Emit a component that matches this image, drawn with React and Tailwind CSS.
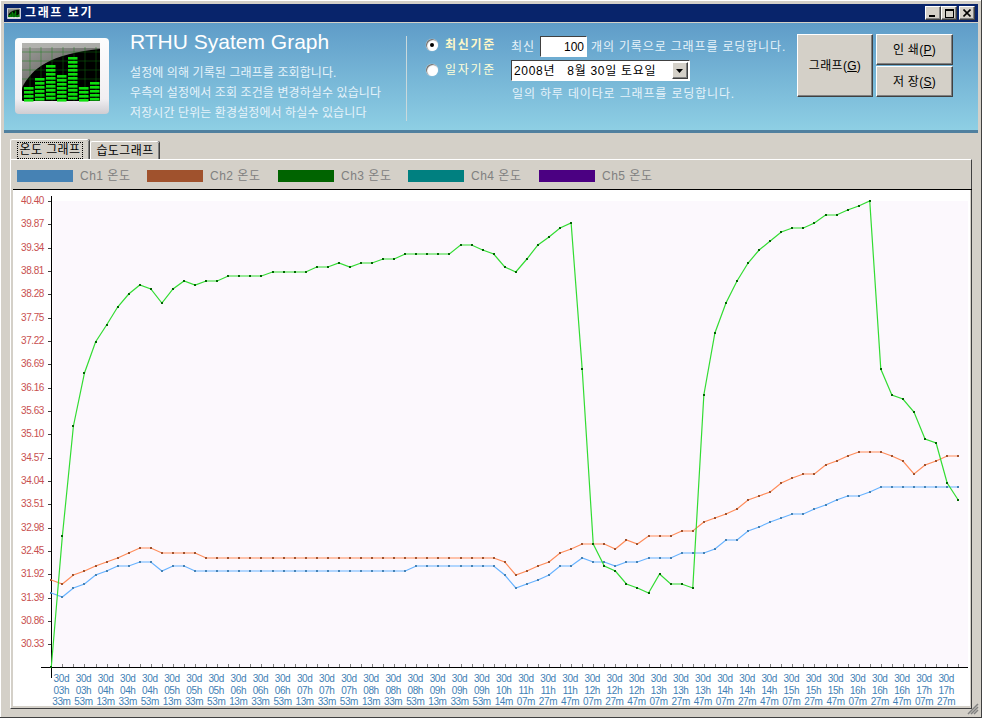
import React from "react";

const green = [666, 535, 425, 372, 341, 324, 306, 293, 284, 288, 302, 288, 280, 284, 280, 280, 275, 275, 275, 275, 271, 271, 271, 271, 266, 266, 262, 266, 262, 262, 258, 258, 253, 253, 253, 253, 253, 244, 244, 249, 253, 266, 271, 258, 244, 236, 227, 222, 368, 543, 565, 570, 583, 587, 592, 573, 583, 583, 587, 394, 332, 302, 280, 262, 249, 240, 231, 227, 227, 222, 214, 214, 209, 205, 200, 368, 394, 398, 411, 438, 442, 482, 499];
const orange = [579, 583, 574, 570, 565, 561, 557, 552, 547, 547, 552, 552, 552, 552, 557, 557, 557, 557, 557, 557, 557, 557, 557, 557, 557, 557, 557, 557, 557, 557, 557, 557, 557, 557, 557, 557, 557, 557, 557, 557, 557, 561, 574, 570, 565, 561, 552, 548, 543, 543, 543, 548, 539, 543, 535, 535, 535, 530, 530, 521, 517, 513, 508, 499, 495, 491, 482, 477, 473, 473, 464, 460, 455, 451, 451, 451, 455, 460, 473, 464, 460, 455, 455];
const blue = [592, 596, 587, 583, 574, 570, 565, 565, 561, 561, 570, 565, 565, 570, 570, 570, 570, 570, 570, 570, 570, 570, 570, 570, 570, 570, 570, 570, 570, 570, 570, 570, 570, 565, 565, 565, 565, 565, 565, 565, 565, 574, 587, 583, 579, 574, 565, 565, 557, 561, 561, 565, 561, 561, 557, 557, 557, 552, 552, 552, 548, 539, 539, 530, 526, 521, 517, 513, 513, 508, 504, 499, 495, 495, 491, 486, 486, 486, 486, 486, 486, 486, 486];

const yLabels = ["40.40", "39.87", "39.34", "38.81", "38.28", "37.75", "37.22", "36.69", "36.16", "35.63", "35.10", "34.57", "34.04", "33.51", "32.98", "32.45", "31.92", "31.39", "30.86", "30.33"];
const times = ["03h 33m", "03h 53m", "04h 13m", "04h 33m", "04h 53m", "05h 13m", "05h 33m", "05h 53m", "06h 13m", "06h 33m", "06h 53m", "07h 13m", "07h 33m", "07h 53m", "08h 13m", "08h 33m", "08h 53m", "09h 13m", "09h 33m", "09h 53m", "10h 14m", "11h 07m", "11h 27m", "11h 47m", "12h 07m", "12h 27m", "12h 47m", "13h 07m", "13h 27m", "13h 47m", "14h 07m", "14h 27m", "14h 47m", "15h 07m", "15h 27m", "15h 47m", "16h 07m", "16h 27m", "16h 47m", "17h 07m", "17h 27m"];
const legend = [
  ["Ch1 온도", "bg-[#4682b4]", "w-[56px]", "mr-[17px]"],
  ["Ch2 온도", "bg-[#a0522d]", "w-[56px]", "mr-[18px]"],
  ["Ch3 온도", "bg-[#006400]", "w-[56px]", "mr-[17px]"],
  ["Ch4 온도", "bg-[#008080]", "w-[56px]", "mr-[18px]"],
  ["Ch5 온도", "bg-[#4b0082]", "w-[56px]", ""],
];

const px = (i) => 51.3 + i * 11.06;
const bevel = "border border-t-white border-l-white border-r-[#404040] border-b-[#404040] shadow-[inset_-1px_-1px_0_#808080]";

function Series({ data, line, dot }) {
  return (
    <g>
      <polyline points={data.map((y, i) => `${px(i)},${y}`).join(" ")} fill="none" stroke={line} strokeWidth="1.2" shapeRendering="geometricPrecision" />
      {data.map((y, i) => (
        <rect key={i} x={Math.round(px(i)) - 1} y={y - 1} width="2" height="2" fill={dot} />
      ))}
    </g>
  );
}

function Chart() {
  return (
    <svg viewBox="13 189 957 516" className="block h-[516px] w-[957px] bg-white" shapeRendering="crispEdges">
      <rect x="53" y="200" width="915" height="466" fill="#fcf8fd" />
      {yLabels.map((label, i) => {
        const y = Math.round(200 + i * 23.33);
        return (
          <g key={label}>
            <line x1="48" x2="51" y1={y} y2={y} stroke="#404040" />
            <text x="44" y={y + 3} textAnchor="end" fontSize="10" letterSpacing="-0.4" fill="#c85050">{label}</text>
          </g>
        );
      })}
      {green.map((_, i) => (
        <line key={i} x1={Math.round(px(i))} x2={Math.round(px(i))} y1="663" y2="666" stroke="#808080" />
      ))}
      <line x1="41" x2="968" y1="666.5" y2="666.5" stroke="#000" />
      <line x1="51.5" x2="51.5" y1="195" y2="677" stroke="#000" />
      <Series data={blue} line="#66b2ff" dot="#4682b4" />
      <Series data={orange} line="#ff8c5a" dot="#a0522d" />
      <Series data={green} line="#32dc32" dot="#006400" />
      {times.map((t, n) => {
        const [h, m] = t.split(" ");
        const x = px(n * 2 + 1) - 1;
        return (
          <text key={t} textAnchor="middle" fontSize="10" letterSpacing="-0.4" fill="#3f7fb5">
            <tspan x={x} y="681">30d</tspan>
            <tspan x={x} y="693">{h}</tspan>
            <tspan x={x} y="704">{m}</tspan>
          </text>
        );
      })}
    </svg>
  );
}

function Logo({ className }) {
  const bars = [[24, 87], [35, 78], [46, 65], [57, 75], [68, 57], [79, 87], [90, 82]];
  return (
    <svg viewBox="15 38 94 76" className={className}>
      <defs>
        <linearGradient id="card" x1="0" y1="0" x2="0" y2="1">
          <stop offset="0" stopColor="#fdfdfd" />
          <stop offset="0.8" stopColor="#f1eff2" />
          <stop offset="1" stopColor="#cfcdd2" />
        </linearGradient>
        <linearGradient id="glare" x1="0" y1="0" x2="1" y2="1">
          <stop offset="0" stopColor="#a0a09c" />
          <stop offset="1" stopColor="#4a4a48" />
        </linearGradient>
      </defs>
      <rect x="15" y="38" width="94" height="76" rx="4" fill="url(#card)" />
      <rect x="22" y="43" width="78" height="58" rx="1" fill="#000" />
      <path d="M22 88 C32 68 50 54 100 49 V43 H22 Z" fill="url(#glare)" />
      <rect x="22" y="43" width="78" height="5" fill="#b8b8b4" opacity="0.8" />
      {[30, 41, 52, 63, 74, 85, 96].map((x) => (
        <line key={x} x1={x} x2={x} y1="47" y2="101" stroke="#0f7f0f" strokeWidth="0.7" opacity="0.6" />
      ))}
      {[52, 61, 70, 79, 88, 97].map((y) => (
        <line key={y} x1="22" x2="100" y1={y} y2={y} stroke="#0f7f0f" strokeWidth="0.7" opacity="0.6" />
      ))}
      {bars.map(([x, top]) => {
        const segs = [];
        for (let y = top; y < 100; y += 4) segs.push(y);
        return segs.map((y) => <rect key={`${x}-${y}`} x={x} y={y} width="9.5" height="2.6" fill="#0ee00e" />);
      })}
    </svg>
  );
}

function Radio({ checked }) {
  return (
    <span className="flex h-[12px] w-[12px] items-center justify-center rounded-full bg-white shadow-[inset_1px_1px_1px_#666,0_0_1px_#fff]">
      {checked && <span className="h-[4px] w-[4px] rounded-full bg-black" />}
    </span>
  );
}

function CaptionButton({ children }) {
  return <div className={`flex h-[14px] w-[16px] items-center justify-center bg-[#d4d0c8] ${bevel}`}>{children}</div>;
}

function FaceButton({ className, children }) {
  return <button className={`flex items-center justify-center bg-[#d4d0c8] text-[12px] tracking-[0.3px] text-black ${bevel} ${className}`}>{children}</button>;
}

export default function App() {
  return (
    <div className="relative flex h-[718px] w-[982px] flex-col overflow-hidden border-r border-b border-r-[#404040] border-b-[#404040] bg-[#d4d0c8] pt-[4px] pr-[3px] pl-[4px] [font-family:'Liberation_Sans','Noto_Sans_CJK_KR',sans-serif] shadow-[inset_1px_1px_0_#fff]">
      <div className="flex h-[18px] items-center bg-[#08246b] pr-[3px] pl-[3px]">
        <Logo className="h-[11px] w-[14px]" />
        <span className="ml-[4px] text-[12px] font-bold tracking-[1.6px] text-white">그래프 보기</span>
        <div className="ml-auto flex">
          <CaptionButton><span className="mt-[6px] mr-[2px] h-[2px] w-[6px] bg-black" /></CaptionButton>
          <CaptionButton><span className="h-[9px] w-[9px] border border-t-2 border-black" /></CaptionButton>
          <div className="ml-[2px]">
            <CaptionButton>
              <svg viewBox="0 0 8 8" className="h-[8px] w-[8px]"><path d="M0.5 0.5 7.5 7.5M7.5 0.5 0.5 7.5" stroke="#000" strokeWidth="1.6" /></svg>
            </CaptionButton>
          </div>
        </div>
      </div>

      <div className="mt-px flex h-[107px] bg-gradient-to-b from-[#5f9cc8] to-[#8ecfe4] text-[12px] text-[#e6f3fa]">
        <Logo className="mt-[15px] ml-[11px] h-[76px] w-[94px] shrink-0" />
        <div className="ml-[21px] w-[276px] shrink-0">
          <div className="mt-[6px] text-[21px] leading-[26px] text-white">RTHU Syatem Graph</div>
          <div className="mt-[8px] leading-[20px] tracking-[0.1px]">
            <div>설정에 의해 기록된 그래프를 조회합니다.</div>
            <div>우측의 설정에서 조회 조건을 변경하실수 있습니다</div>
            <div>저장시간 단위는 환경설정에서 하실수 있습니다</div>
          </div>
        </div>
        <div className="mt-[13px] h-[85px] w-px shrink-0 bg-[#c9d9dc]" />
        <div className="ml-[19px] w-[85px] shrink-0 pt-[15px]">
          <div className="flex h-[14px] items-center gap-[7px]">
            <Radio checked />
            <span className="font-bold tracking-[1.7px] text-[#fff8c8]">최신기준</span>
          </div>
          <div className="mt-[11px] flex h-[14px] items-center gap-[7px]">
            <Radio />
            <span className="tracking-[1.7px] text-[#ffffd8]">일자기준</span>
          </div>
        </div>
        <div className="w-[286px] shrink-0 pt-[13px] tracking-[0.85px]">
          <div className="flex h-[21px] items-center">
            <span className="w-[29px]">최신</span>
            <div className="flex h-[21px] w-[47px] items-center justify-end border border-t-[#404040] border-l-[#404040] border-r-white border-b-white bg-white pr-[2px] tracking-normal text-black">100</div>
            <span className="ml-[4px]">개의 기록으로 그래프를 로딩합니다.</span>
          </div>
          <div className="mt-[3px] flex h-[21px] w-[179px] items-center justify-between border border-t-[#404040] border-l-[#404040] border-r-white border-b-white bg-white pr-px pl-[2px] tracking-[0.7px] text-black">
            <span className="whitespace-pre">2008년   8월 30일 토요일</span>
            <div className={`flex h-[17px] w-[16px] items-center justify-center bg-[#d4d0c8] ${bevel}`}>
              <svg viewBox="0 0 8 4" className="h-[4px] w-[8px]"><path d="M0 0H7L3.5 4Z" fill="#000" /></svg>
            </div>
          </div>
          <div className="mt-[6px] pl-px leading-[15px]">일의 하루 데이타로 그래프를 로딩합니다.</div>
        </div>
        <FaceButton className="mt-[11px] h-[63px] w-[76px] shrink-0">
          <span>그래프(<span className="underline">G</span>)</span>
        </FaceButton>
        <div className="mt-[11px] ml-[3px] flex shrink-0 flex-col gap-px">
          <FaceButton className="h-[31px] w-[77px]"><span>인 쇄(<span className="underline">P</span>)</span></FaceButton>
          <FaceButton className="h-[31px] w-[77px]"><span>저 장(<span className="underline">S</span>)</span></FaceButton>
        </div>
      </div>
      <div className="h-[3px] bg-[#50809f]" />

      <div className="mt-[6px] flex h-[20px] items-end pl-[6px] text-[12px] text-black">
        <div className="flex h-[20px] w-[79px] items-center justify-center rounded-t-[2px] border-t border-l border-white border-r-[#404040] bg-[#d4d0c8] pt-[2px] shadow-[inset_-1px_0_0_#808080,1px_0_0_#404040]">
          <span className="border border-dotted border-black px-[2px] leading-[15px] tracking-[0.4px]">온도 그래프</span>
        </div>
        <div className="ml-px flex h-[18px] w-[69px] items-center justify-center rounded-t-[2px] border-t border-l border-white bg-[#d4d0c8] pt-px shadow-[inset_-1px_0_0_#808080,1px_0_0_#404040]">
          <span className="tracking-[0.4px]">습도그래프</span>
        </div>
      </div>

      <div className="ml-[6px] mr-[6px] flex h-[550px] flex-col border-t border-l border-r border-b border-t-white border-l-white border-r-[#404040] border-b-[#404040] pl-[2px]">
        <div className="flex h-[29px] items-center pt-[2px] pl-[4px] text-[12px] tracking-[0.5px] text-[#808080]">
          {legend.map(([label, color, width, gap]) => (
            <div key={label} className={`flex items-center ${gap}`}>
              <span className={`h-[12px] ${width} ${color}`} />
              <span className="ml-[7px] w-[50px] whitespace-nowrap">{label}</span>
            </div>
          ))}
        </div>
        <div className="h-px w-[959px] bg-black" />
        <Chart />
      </div>

      <svg viewBox="0 0 12 12" className="absolute right-[2px] bottom-[2px] h-[12px] w-[12px]">
        <path d="M11 1 1 11M11 4 4 11M11 7 7 11" stroke="#808080" strokeWidth="1.5" fill="none" />
      </svg>
    </div>
  );
}
